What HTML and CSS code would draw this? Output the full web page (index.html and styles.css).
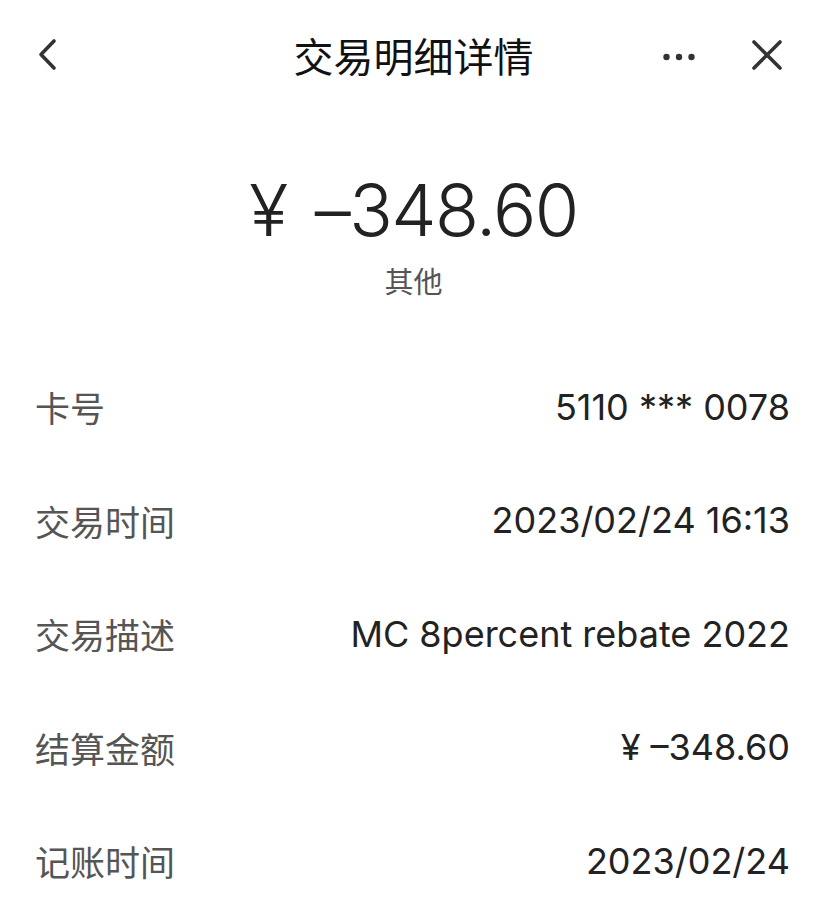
FILE: index.html
```html
<!DOCTYPE html>
<html lang="zh-CN">
<head>
    <meta charset="UTF-8">
    <meta name="viewport" content="width=device-width, initial-scale=1.0">
    <title>交易明细详情</title>
    <link rel="stylesheet" href="styles.css">
</head>
<body>
    <div class="page">
        <div class="nav">
            <button class="nav-btn back" aria-label="返回">
                <svg width="24" height="34" viewBox="0 0 24 34">
                    <path d="M18 3 L5 16.5 L18 30" fill="none" stroke="#333" stroke-width="3.6" stroke-linecap="round" stroke-linejoin="round"/>
                </svg>
            </button>
            <div class="nav-title">交易明细详情</div>
            <div class="nav-actions">
                <button class="nav-btn more" aria-label="更多">
                    <svg width="32" height="10" viewBox="0 0 32 10">
                        <circle cx="3.5" cy="5" r="3.2" fill="#333"/>
                        <circle cx="16" cy="5" r="3.2" fill="#333"/>
                        <circle cx="28.5" cy="5" r="3.2" fill="#333"/>
                    </svg>
                </button>
                <button class="nav-btn close" aria-label="关闭">
                    <svg width="30" height="30" viewBox="0 0 30 30">
                        <path d="M2 2 L28 28 M28 2 L2 28" fill="none" stroke="#333" stroke-width="3.6" stroke-linecap="round"/>
                    </svg>
                </button>
            </div>
        </div>

        <div class="summary">
            <div class="amount"><span class="currency">¥</span>–348.60</div>
            <div class="category">其他</div>
        </div>

        <div class="details">
            <div class="row">
                <span class="label">卡号</span>
                <span class="value">5110 *** 0078</span>
            </div>
            <div class="row">
                <span class="label">交易时间</span>
                <span class="value">2023/02/24 16:13</span>
            </div>
            <div class="row">
                <span class="label">交易描述</span>
                <span class="value">MC 8percent rebate 2022</span>
            </div>
            <div class="row">
                <span class="label">结算金额</span>
                <span class="value">¥ –348.60</span>
            </div>
            <div class="row">
                <span class="label">记账时间</span>
                <span class="value">2023/02/24</span>
            </div>
        </div>
    </div>
</body>
</html>
```
FILE: styles.css
```css
body {
    margin: 0;
    background: #fff;
    font-family: Inter, "Noto Sans CJK SC", sans-serif;
    color: #222;
}

.page {
    width: 827px;
    height: 907px;
    overflow: hidden;
}

.nav {
    display: flex;
    align-items: center;
    justify-content: space-between;
    height: 104px;
    padding: 6px 45px 0 36px;
    box-sizing: border-box;
    position: relative;
}

.nav-btn {
    display: flex;
    align-items: center;
    justify-content: center;
    background: none;
    border: none;
    padding: 0;
    cursor: pointer;
}

.nav-btn.more {
    margin-top: 4px;
}

.nav-title {
    position: absolute;
    left: 0;
    right: 0;
    text-align: center;
    font-family: "Noto Sans CJK SC", sans-serif;
    font-size: 40px;
    color: #111;
    pointer-events: none;
}

.nav-actions {
    display: flex;
    align-items: center;
    gap: 57px;
}

.summary {
    display: flex;
    flex-direction: column;
    align-items: center;
    padding-top: 66px;
    height: 246px;
    box-sizing: border-box;
}

.amount {
    font-size: 72px;
    font-weight: 300;
    line-height: 80px;
    color: #222;
    letter-spacing: -1.5px;
}

.currency {
    margin-right: 28px;
}

.category {
    font-family: "Noto Sans CJK SC", sans-serif;
    font-size: 29px;
    line-height: 40px;
    margin-top: 10px;
    color: #555;
}

.details {
    padding: 0 37px 0 35px;
}

.row {
    display: flex;
    justify-content: space-between;
    align-items: center;
    height: 113.5px;
}

.label {
    font-family: "Noto Sans CJK SC", sans-serif;
    font-size: 35px;
    color: #555;
}

.value {
    font-size: 36px;
    color: #222;
}
```
